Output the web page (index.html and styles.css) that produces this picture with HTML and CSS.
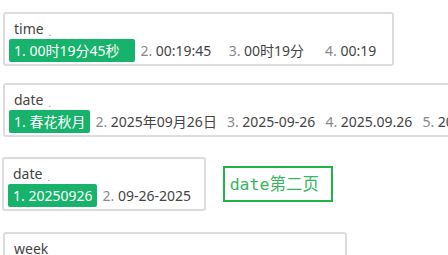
FILE: index.html
```html
<!DOCTYPE html>
<html lang="zh-CN">

<head>
    <meta charset="UTF-8">
    <meta name="viewport" content="width=device-width, initial-scale=1.0">
    <title>候选框预览</title>
    <link rel="stylesheet" href="styles.css">
</head>

<body>
    <div class="panel">
        <div class="preedit">time<span class="caret">.</span></div>
        <div class="candidates">
            <span class="cand active"><span class="idx">1.</span> 00时19分45秒   </span>
            <span class="cand"><span class="idx">2.</span> 00:19:45  </span>
            <span class="cand"><span class="idx">3.</span> 00时19分   </span>
            <span class="cand"><span class="idx">4.</span> 00:19  </span>
        </div>
    </div>

    <div class="panel">
        <div class="preedit">date<span class="caret">.</span></div>
        <div class="candidates">
            <span class="cand active"><span class="idx">1.</span> 春花秋月</span>
            <span class="cand"><span class="idx">2.</span> 2025年09月26日</span>
            <span class="cand"><span class="idx">3.</span> 2025-09-26</span>
            <span class="cand"><span class="idx">4.</span> 2025.09.26</span>
            <span class="cand"><span class="idx">5.</span> 2025/09/26</span>
        </div>
    </div>

    <div class="panel-line">
        <div class="panel">
            <div class="preedit">date<span class="caret">.</span></div>
            <div class="candidates">
                <span class="cand active"><span class="idx">1.</span> 20250926</span>
                <span class="cand"><span class="idx">2.</span> 09-26-2025 </span>
            </div>
        </div>
        <!-- 翻页提示 -->
        <div class="page-tag"><span class="mono">date</span>第二页</div>
    </div>

    <div class="panel">
        <div class="preedit">week<span class="caret">.</span></div>
        <div class="candidates">
            <span class="cand active"><span class="idx">1.</span> 星期五</span>
            <span class="cand"><span class="idx">2.</span> 周五</span>
            <span class="cand"><span class="idx">3.</span> 礼拜五</span>
            <span class="cand"><span class="idx">4.</span> 金曜日</span>
            <span class="cand"><span class="idx">5.</span> Friday   </span>
        </div>
    </div>
</body>

</html>
```

FILE: styles.css
```css
html,
body {
    overflow: hidden;
}

body {
    display: flex;
    flex-direction: column;
    align-items: flex-start;
    gap: 17px;
    margin: 0;
    padding: 12px 0 0 3px;
    background-color: #fff;
    font-family: "Noto Sans", "Noto Sans CJK SC", sans-serif;
    font-size: 14px;
    color: #444;
}

/* 候选框 */
.panel {
    flex-shrink: 0;
    width: max-content;
    border: 2px solid #dcdcdc;
    border-radius: 3px;
    background-color: #fff;
    padding: 4px 4px 2px 4px;
}

.preedit {
    padding-left: 5px;
    line-height: 21px;
    color: #444;
}

.preedit .caret {
    margin-left: 5px;
    font-size: 9px;
    line-height: 0;
    color: #777;
    position: relative;
    top: 2px;
}

.candidates {
    display: flex;
}

.cand {
    padding: 0 5px;
    line-height: 23px;
    white-space: pre;
    color: #444;
    border-radius: 2px;
}

.cand .idx {
    color: #888;
}

.cand.active {
    background-color: #17b26b;
    color: #fff;
}

.cand.active .idx {
    color: #fff;
}

/* 第二页 */
.panel-line {
    display: flex;
    align-items: center;
    gap: 17px;
    margin: 3px 0 4px -1px;
}

.page-tag {
    border: 2px solid #22b24c;
    padding: 4px 12px 4px 5px;
    font-size: 16.5px;
    line-height: 23px;
    color: #35b85d;
}

.page-tag .mono {
    font-family: "DejaVu Sans Mono", monospace;
}
```
